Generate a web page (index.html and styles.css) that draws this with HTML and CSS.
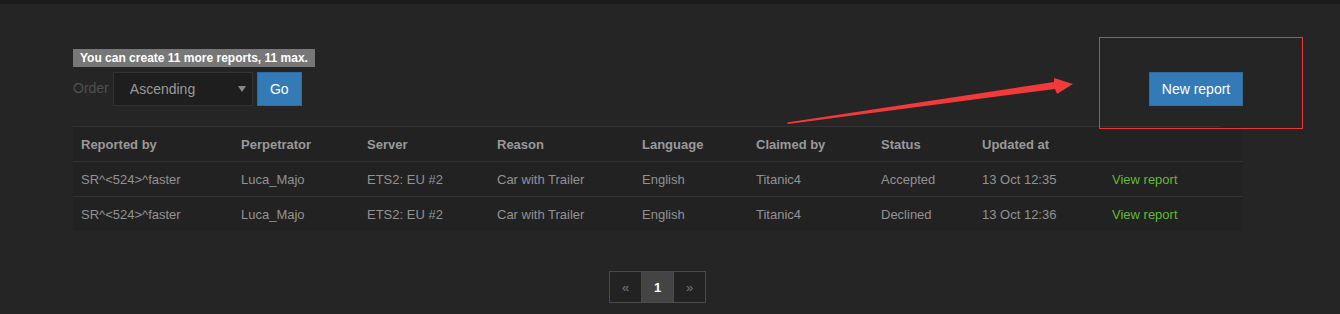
FILE: index.html
```html
<!DOCTYPE html>
<html>
<head>
<meta charset="utf-8">
<link rel="stylesheet" href="styles.css">
</head>
<body>
<div class="topbar"></div>
<div class="main">
  <div class="toolbar">
    <div class="left">
      <span class="badge">You can create 11 more reports, 11 max.</span>
      <form class="order-form">
        <label class="order-label">Order</label>
        <div class="select-wrap">
          <select class="order-select"><option>Ascending</option><option>Descending</option></select>
        </div>
        <button type="button" class="btn btn-go">Go</button>
      </form>
    </div>
    <div class="right">
      <button type="button" class="btn btn-new">New report</button>
    </div>
  </div>
  <div class="divider"></div>
  <table class="reports">
    <thead>
      <tr>
        <th class="c1">Reported by</th>
        <th class="c2">Perpetrator</th>
        <th class="c3">Server</th>
        <th class="c4">Reason</th>
        <th class="c5">Language</th>
        <th class="c6">Claimed by</th>
        <th class="c7">Status</th>
        <th class="c8">Updated at</th>
        <th class="c9"></th>
      </tr>
    </thead>
    <tbody>
      <tr>
        <td>SR^&lt;524&gt;^faster</td>
        <td>Luca_Majo</td>
        <td>ETS2: EU #2</td>
        <td>Car with Trailer</td>
        <td>English</td>
        <td>Titanic4</td>
        <td>Accepted</td>
        <td>13 Oct 12:35</td>
        <td><a class="view" href="#">View report</a></td>
      </tr>
      <tr>
        <td>SR^&lt;524&gt;^faster</td>
        <td>Luca_Majo</td>
        <td>ETS2: EU #2</td>
        <td>Car with Trailer</td>
        <td>English</td>
        <td>Titanic4</td>
        <td>Declined</td>
        <td>13 Oct 12:36</td>
        <td><a class="view" href="#">View report</a></td>
      </tr>
    </tbody>
  </table>
  <div class="pager">
    <a class="page" href="#">&laquo;</a>
    <a class="page active" href="#">1</a>
    <a class="page" href="#">&raquo;</a>
  </div>
</div>
<div class="annot-box"></div>
<svg class="annot-arrow" width="1340" height="314" viewBox="0 0 1340 314">
  <polygon points="787,122.5 1054,82 1054,78 1073,84 1057,94 1055,89 788,124" fill="#f23a3a"/>
</svg>
</body>
</html>
```

FILE: styles.css
```css
html, body {
  margin: 0;
  padding: 0;
}
body {
  background: #252525;
  font-family: "Liberation Sans", Arial, sans-serif;
  font-size: 14px;
  color: #999;
  width: 1340px;
  height: 314px;
  overflow: hidden;
  position: relative;
}
.topbar {
  height: 4px;
  background: #1b1b1b;
}
.main {
  margin-left: 73px;
  width: 1170px;
}
.toolbar {
  display: flex;
  justify-content: space-between;
  align-items: flex-end;
  margin-top: 45px;
}
.left {
  display: flex;
  flex-direction: column;
  align-items: flex-start;
}
.badge {
  display: inline-block;
  background: #777;
  color: #fff;
  font-weight: bold;
  font-size: 12px;
  line-height: 18px;
  height: 18px;
  padding: 0 7px;
}
.order-form {
  display: flex;
  align-items: center;
  margin: 5px 0 0 0;
}
.order-label {
  color: #505050;
  font-size: 14px;
  margin-right: 4px;
  margin-top: -2px;
}
.select-wrap {
  position: relative;
  width: 140px;
  height: 34px;
}
.select-wrap::after {
  content: "";
  position: absolute;
  right: 7px;
  top: 14px;
  border-left: 4px solid transparent;
  border-right: 4px solid transparent;
  border-top: 6px solid #888;
}
.order-select {
  appearance: none;
  -webkit-appearance: none;
  width: 140px;
  height: 34px;
  box-sizing: border-box;
  background: #1e1e1e;
  border: 1px solid #333;
  border-radius: 0;
  color: #999;
  font-family: "Liberation Sans", Arial, sans-serif;
  font-size: 14px;
  padding: 0 0 0 16px;
  outline: none;
}
.btn {
  box-sizing: border-box;
  height: 34px;
  background: #337ab7;
  border: 1px solid #2e6da4;
  border-radius: 0;
  color: #fff;
  font-family: "Liberation Sans", Arial, sans-serif;
  font-size: 14px;
  padding: 0;
}
.btn-go {
  width: 45px;
  margin-left: 4px;
}
.btn-new {
  width: 94px;
}
.divider {
  margin-top: 20px;
  width: 1147px;
  height: 1px;
  background: #333;
}
.reports {
  width: 1170px;
  border-collapse: collapse;
  background: #222;
  table-layout: fixed;
  font-size: 13px;
}
.reports th, .reports td {
  padding: 0 8px;
  height: 34px;
  text-align: left;
  vertical-align: middle;
  white-space: nowrap;
}
.reports th {
  color: #999;
  font-weight: bold;
  border-bottom: 1px solid #333;
}
.reports td {
  color: #929292;
  border-bottom: 1px solid #333;
}
.reports tbody tr:last-child td {
  border-bottom: none;
}
.c1 { width: 144px; }
.c2 { width: 110px; }
.c3 { width: 114px; }
.c4 { width: 129px; }
.c5 { width: 98px; }
.c6 { width: 109px; }
.c7 { width: 85px; }
.c8 { width: 114px; }
.c9 { width: 123px; }
.view {
  color: #5fbb2f;
  text-decoration: none;
}
.pager {
  display: flex;
  justify-content: center;
  margin-top: 40px;
}
.page {
  box-sizing: border-box;
  width: 33px;
  height: 32px;
  border: 1px solid #4a4a4a;
  margin-left: -1px;
  display: flex;
  align-items: center;
  justify-content: center;
  color: #777;
  text-decoration: none;
  font-size: 13px;
  background: #222;
}
.page.active {
  background: #444;
  color: #fff;
  font-weight: bold;
}
.annot-box {
  position: absolute;
  left: 1099px;
  top: 37px;
  width: 202px;
  height: 90px;
  border: 1px solid #e8383a;
  pointer-events: none;
}
.annot-arrow {
  position: absolute;
  left: 0;
  top: 0;
  pointer-events: none;
}
```
